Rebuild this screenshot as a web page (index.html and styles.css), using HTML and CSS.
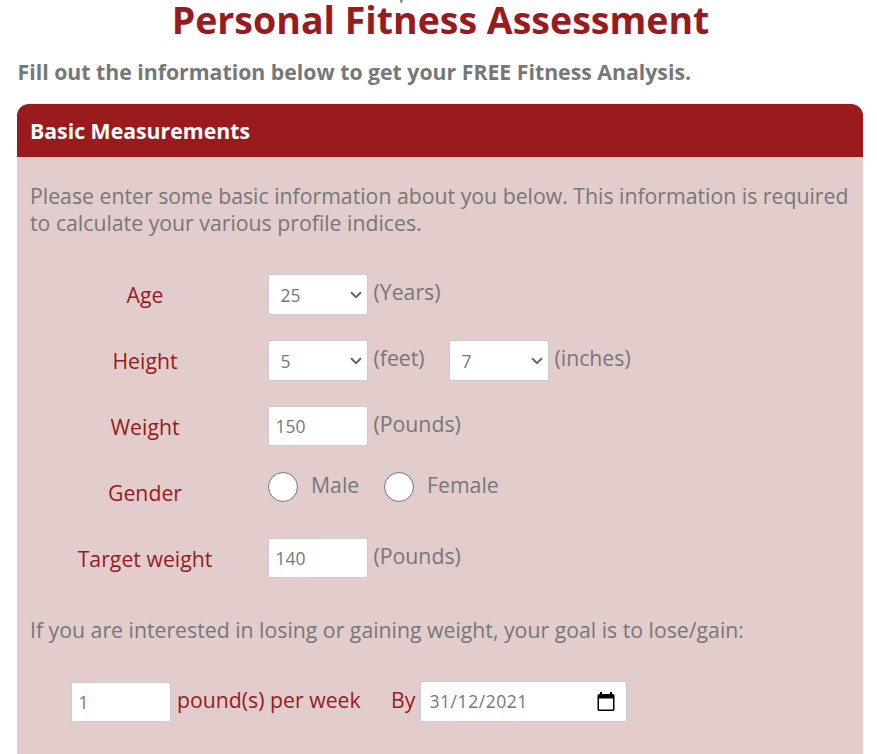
FILE: index.html
```html
<!DOCTYPE html>
<html lang="en">
<head>
<meta charset="utf-8">
<title>Personal Fitness Assessment</title>
<link rel="stylesheet" href="styles.css">
</head>
<body>
<main class="page">
  <h1>Personal Fitness Assessment</h1>
  <p class="lead">Fill out the information below to get your FREE Fitness Analysis.</p>
  <section class="card">
    <h2>Basic Measurements</h2>
    <div class="body">
      <p class="intro">Please enter some basic information about you below. This information is required to calculate your various profile indices.</p>
      <div class="row"><div class="name">Age</div>
        <div class="field select">25<svg class="chev" viewBox="0 0 12 8"><path d="M1 1.2 6 6.2 11 1.2"/></svg></div><span class="unit">(Years)</span></div>
      <div class="row"><div class="name">Height</div>
        <div class="field select">5<svg class="chev" viewBox="0 0 12 8"><path d="M1 1.2 6 6.2 11 1.2"/></svg></div><span class="unit feet">(feet)</span>
        <div class="field select">7<svg class="chev" viewBox="0 0 12 8"><path d="M1 1.2 6 6.2 11 1.2"/></svg></div><span class="unit">(inches)</span></div>
      <div class="row"><div class="name">Weight</div><div class="field">150</div><span class="unit">(Pounds)</span></div>
      <div class="row"><div class="name">Gender</div><span class="radio"></span><span class="option male">Male</span><span class="radio"></span><span class="option">Female</span></div>
      <div class="row"><div class="name">Target weight</div><div class="field">140</div><span class="unit">(Pounds)</span></div>
      <p class="goal">If you are interested in losing or gaining weight, your goal is to lose/gain:</p>
      <div class="plan"><div class="field">1</div><span class="rate">pound(s) per week</span><span class="by">By</span>
        <div class="field date"><span>31/12/2021</span><svg class="cal" viewBox="0 0 18 20"><path fill-rule="evenodd" d="M3 0h2v2h8V0h2v2h1q1.5 0 1.5 1.5v14q0 1.5-1.5 1.5H2q-1.500 0-1.500-1.500v-14Q.5 2 2 2h1zM2 6.500v11h14v-11z"/></svg></div></div>
    </div>
  </section>
  <svg class="tick" viewBox="0 0 3 4"><path d="M0 0h3L1 4z"/></svg>
</main>
</body>
</html>
```
FILE: styles.css
```css
* { box-sizing: border-box; }
html, body { height: 754px; overflow: hidden; }
body { margin: 0; background: #fff; color: #777; font: 21.25px/27px "Open Sans", sans-serif; }
h1, h2, p { margin: 0; }
.page { position: relative; padding: 0 14px 0 17px; }
h1 { height: 58px; padding-left: 1px; color: #991b1e; font-size: 37.5px; line-height: 40px; text-align: center; white-space: nowrap; }
.tick { position: absolute; top: 0; left: 400px; width: 3px; height: 4px; fill: #777; }
.lead { height: 46px; padding-left: .5px; line-height: 27px; font-weight: 700; white-space: nowrap; }
.card { height: 660px; border-radius: 12px 12px 0 0; background: #e2cccc; overflow: hidden; }
h2 { height: 53px; padding-left: 13px; background: #991b1e; color: #fff; font-size: 21.25px; line-height: 54px; }
.body { padding: 25px 13px 0; }
.intro { height: 79px; margin-right: -5px; }
.row { display: flex; align-items: center; height: 66px; }
.name { width: 229px; margin-right: 9px; padding-left: 1px; text-align: center; color: #991b1e; }
.field { display: flex; flex: none; align-items: center; width: 100px; height: 40px; margin-top: -1px; padding: 2px 0 0 6.5px; background: #fff; border: 1px solid #ccc; font-size: 17.5px; }
.select { height: 41px; margin-top: 1px; justify-content: space-between; padding: 2px 5px 0 11.5px; }
.chev { width: 12px; height: 8px; margin-top: -2px; fill: none; stroke: #666; stroke-width: 2; }
.unit { margin-left: 5.5px; padding-bottom: 5px; }
.feet { width: 75.5px; flex: none; }
.radio { flex: none; width: 30px; height: 30px; margin-top: -10px; border: 1px solid #767676; border-radius: 50%; background: #fff; }
.option { margin-left: 13px; padding-bottom: 15px; }
.male { width: 73px; flex: none; }
.goal { margin-top: 25px; white-space: nowrap; }
.plan { display: flex; align-items: center; margin: 38px 0 0 41px; color: #991b1e; }
.rate { flex: none; width: 220px; padding: 0 0 5px 6px; }
.by { flex: none; width: 29px; padding-bottom: 5px; }
.plan .field { margin-top: 0; color: #777; }
.plan .date { width: 207px; height: 41px; justify-content: space-between; padding: 0 11px 0 8.5px; letter-spacing: .55px; }
.cal { width: 18px; height: 20px; fill: #000; }
```
